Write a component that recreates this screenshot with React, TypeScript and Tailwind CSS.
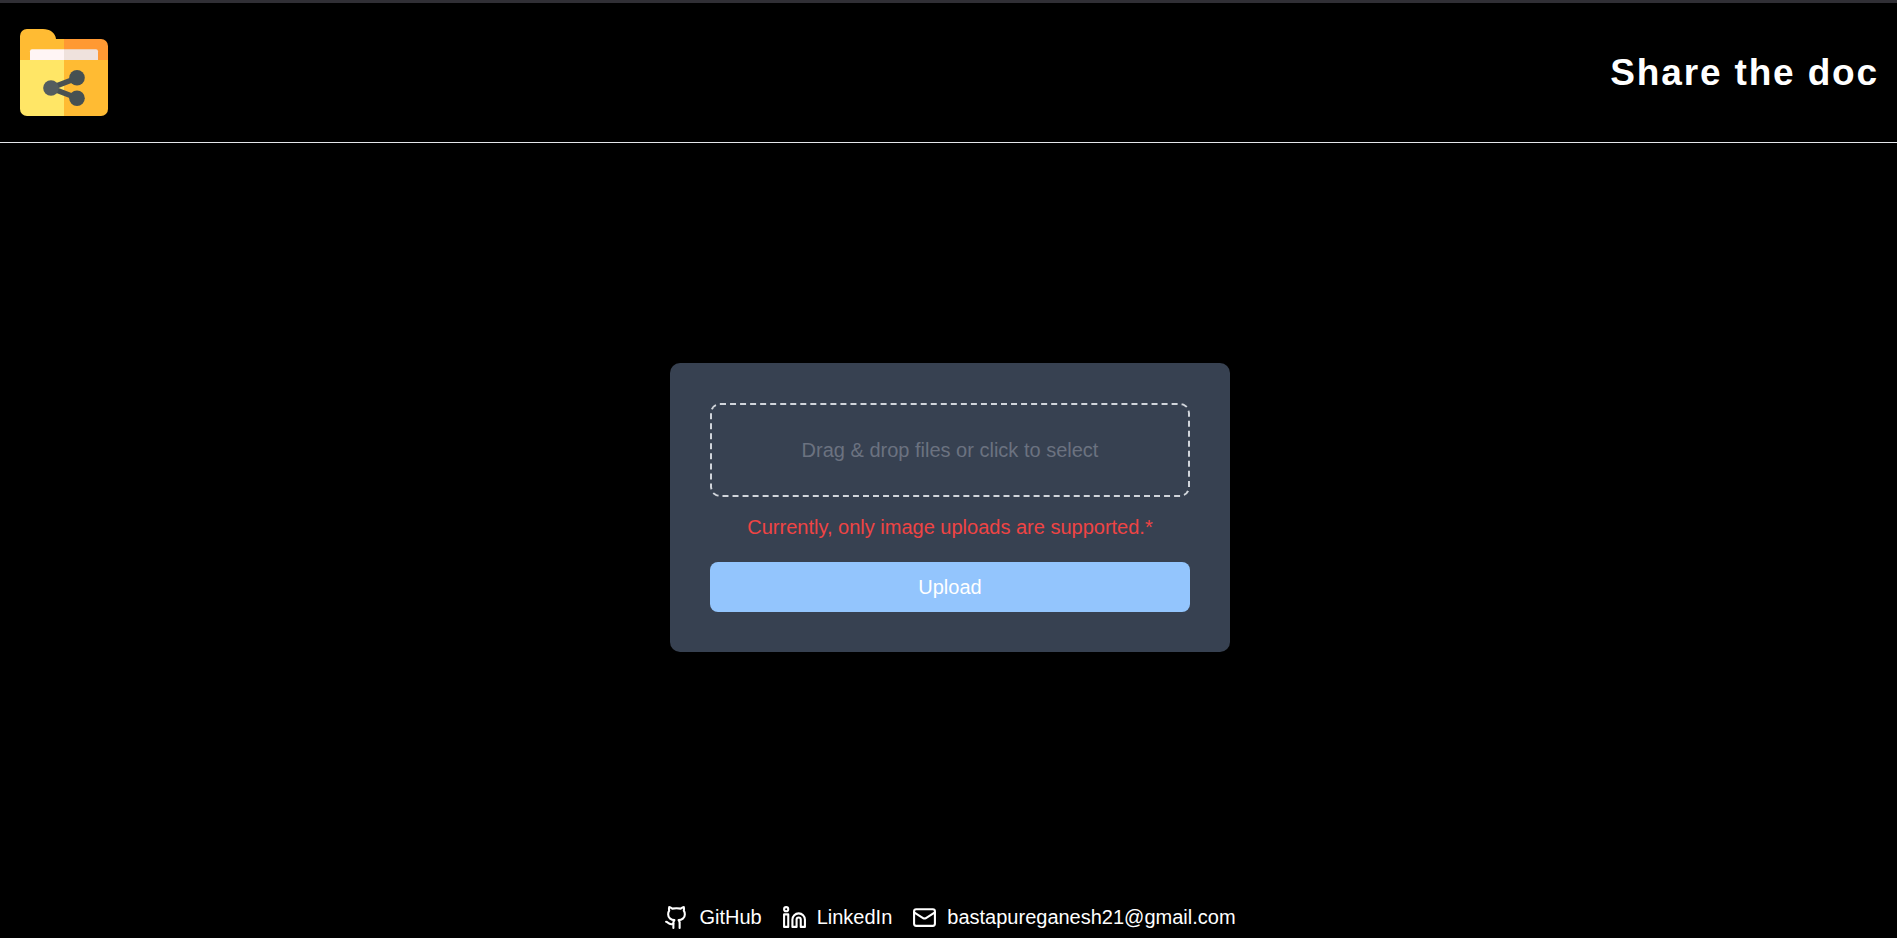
import { useRef } from "react";
import { Github, Linkedin, Mail } from "lucide-react";

function FolderLogo() {
  return (
    <svg viewBox="0 0 88 88" className="size-[88px]" role="img" aria-label="Share the doc logo">
      <path d="M7 0H23C30 0 35.500 4 36 10L44 12V32H0V7A7 7 0 0 1 7 0Z" fill="#ffbb33" />
      <path d="M36 10H44V12H36Z" fill="#ffbb33" />
      <path d="M44 10H81A7 7 0 0 1 88 17V34H44Z" fill="#ff9933" />
      <path d="M30 10H44V32H30Z" fill="#ffbb33" />
      <path d="M12 20.300H44V34H10V22.300A2 2 0 0 1 12 20.300Z" fill="#fff5f5" />
      <path d="M44 20.300H76A2 2 0 0 1 78 22.300V34H44Z" fill="#efe2dd" />
      <path d="M0 31H44V87H7A7 7 0 0 1 0 80Z" fill="#ffe666" />
      <path d="M44 31H88V80A7 7 0 0 1 81 87H44Z" fill="#ffbb33" />
      <path d="M57 49L31 59L57 69" fill="none" stroke="#495152" strokeWidth="5.500" />
      <circle cx="57" cy="48.800" r="7.800" fill="#465052" />
      <circle cx="57" cy="69.200" r="7.800" fill="#465052" />
      <circle cx="31" cy="59" r="7.800" fill="#545d5f" />
    </svg>
  );
}

export default function App() {
  const fileInput = useRef<HTMLInputElement>(null);

  return (
    <div className="flex min-h-screen flex-col border-t-3 border-[#302f35] bg-black font-['Liberation_Sans',Arial,sans-serif] text-[20px] leading-[30px] text-white">
      <header className="flex items-center justify-between border-b border-gray-200 pt-[26px] pr-[18px] pb-[25px] pl-5">
        <FolderLogo />
        <h1 className="text-[37px] leading-[46px] font-bold tracking-wider">Share the doc</h1>
      </header>

      <main className="flex grow items-center justify-center pb-[30px] pl-[3px]">
        <form className="flex w-full max-w-[560px] flex-col rounded-[10px] bg-[#374151] p-10">
          <button
            type="button"
            onClick={() => fileInput.current?.click()}
            className="rounded-[10px] border-2 border-dashed border-[#d1d5db] p-[30px] text-center text-[#6b7280]"
          >
            Drag &amp; drop files or click to select
          </button>
          <input ref={fileInput} type="file" accept="image/*" aria-label="Files" className="hidden" />
          <p className="mt-[15px] mb-5 text-center text-[#ef4444]">
            Currently, only image uploads are supported.*
          </p>
          <button type="button" className="rounded-[8px] bg-[#93c5fd] py-[10px] text-white">
            Upload
          </button>
        </form>
      </main>

      <footer className="flex justify-center gap-5 pb-[6px] pl-[3px]">
        <a href="#github" className="flex items-center gap-[10px]">
          <Github size={25} />
          GitHub
        </a>
        <a href="#linkedin" className="flex items-center gap-[10px]">
          <Linkedin size={25} />
          LinkedIn
        </a>
        <a href="mailto:bastapureganesh21@gmail.com" className="flex items-center gap-[10px]">
          <Mail size={25} />
          bastapureganesh21@gmail.com
        </a>
      </footer>
    </div>
  );
}
